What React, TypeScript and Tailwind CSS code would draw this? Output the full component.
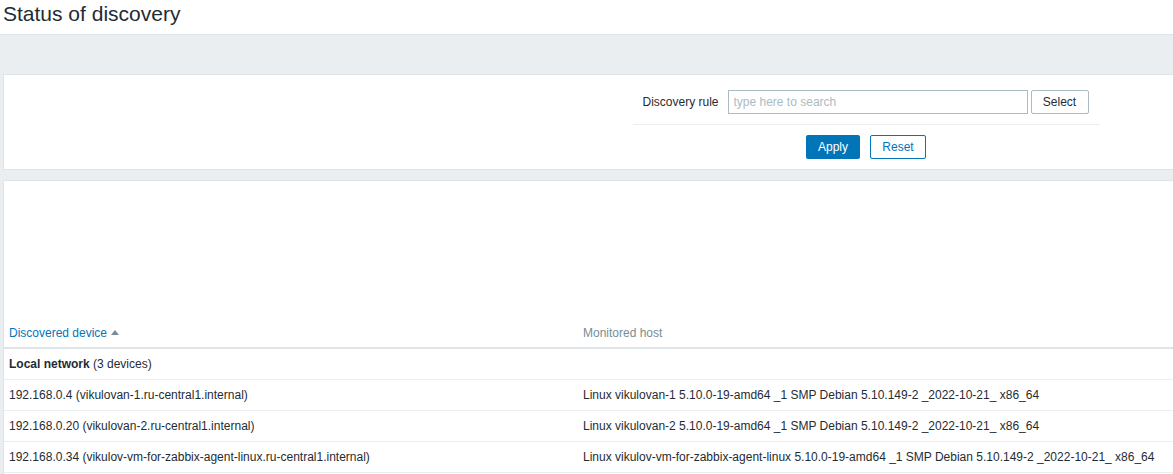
import React from "react";

const rows = [
  {
    device: "192.168.0.4 (vikulovan-1.ru-central1.internal)",
    host: "Linux vikulovan-1 5.10.0-19-amd64 _1 SMP Debian 5.10.149-2 _2022-10-21_ x86_64",
  },
  {
    device: "192.168.0.20 (vikulovan-2.ru-central1.internal)",
    host: "Linux vikulovan-2 5.10.0-19-amd64 _1 SMP Debian 5.10.149-2 _2022-10-21_ x86_64",
  },
  {
    device: "192.168.0.34 (vikulov-vm-for-zabbix-agent-linux.ru-central1.internal)",
    host: "Linux vikulov-vm-for-zabbix-agent-linux 5.10.0-19-amd64 _1 SMP Debian 5.10.149-2 _2022-10-21_ x86_64",
  },
];

export default function App() {
  return (
    <div
      className="w-[1173px] h-[474px] overflow-hidden bg-[#ebeef0] text-[#1f2c33] text-[12px]"
      style={{ fontFamily: '"Liberation Sans", Arial, sans-serif' }}
    >
      <div className="w-[1728px]">
        <header className="h-[35px] bg-white border-b border-[#dfe4e7] pl-[3px]">
          <h1 className="text-[21px] leading-[26px] pt-[1px] font-normal text-[#1f2c33]">
            Status of discovery
          </h1>
        </header>

        <div className="pl-[3px] pt-[39px]">
          {/* Filter box */}
          <div className="bg-white border-l border-y border-[#dfe4e7] h-[96px] flex flex-col items-center pt-[15px]">
            <div className="w-[467px]">
              <div className="flex items-center pl-[10px] h-[24px]">
                <label className="w-[75px] shrink-0 whitespace-nowrap text-right leading-[24px]">
                  Discovery rule
                </label>
                <input
                  className="ml-[10px] w-[300px] shrink-0 h-[24px] border border-[#acbbc2] px-[5px] text-[12px] outline-none placeholder:text-[#acbbc2]"
                  placeholder="type here to search"
                />
                <button className="ml-[3px] w-[58px] shrink-0 h-[24px] border border-[#acbbc2] rounded-[2px] bg-white text-[#1f2c33]">
                  Select
                </button>
              </div>
              <div className="mt-[10px] border-t border-[#ebeef0]" />
              <div className="flex justify-center gap-[10px] mt-[10px]">
                <button className="w-[54px] h-[24px] bg-[#0275b8] text-white rounded-[2px]">
                  Apply
                </button>
                <button className="w-[56px] h-[24px] border border-[#0275b8] text-[#0275b8] bg-white rounded-[2px]">
                  Reset
                </button>
              </div>
            </div>
          </div>

          {/* Table box */}
          <div className="mt-[10px] bg-white border-l border-t border-[#dfe4e7] h-[300px]">
            <div className="h-[137px]" />
            <table className="w-full border-collapse table-fixed">
              <colgroup>
                <col className="w-[574px]" />
                <col />
              </colgroup>
              <thead>
                <tr className="border-b-2 border-[#dfe4e7]">
                  <th className="text-left font-normal px-[5px] h-[30px] align-middle">
                    <span className="text-[#0275b8] inline-flex items-center">
                      Discovered device
                      <span className="ml-[4px] inline-block w-0 h-0 border-l-[4px] border-r-[4px] border-b-[5px] border-l-transparent border-r-transparent border-b-[#768d99]" />
                    </span>
                  </th>
                  <th className="text-left font-normal px-[5px] text-[#768d99]">Monitored host</th>
                </tr>
              </thead>
              <tbody>
                <tr className="border-b border-[#ebeef0]">
                  <td className="px-[5px] h-[31px]">
                    <b className="font-bold">Local network</b> (3 devices)
                  </td>
                  <td className="px-[5px]" />
                </tr>
                {rows.map((r) => (
                  <tr key={r.device} className="border-b border-[#ebeef0]">
                    <td className="px-[5px] h-[31px] whitespace-nowrap">{r.device}</td>
                    <td className="px-[5px] whitespace-nowrap">{r.host}</td>
                  </tr>
                ))}
              </tbody>
            </table>
          </div>
        </div>
      </div>
    </div>
  );
}
